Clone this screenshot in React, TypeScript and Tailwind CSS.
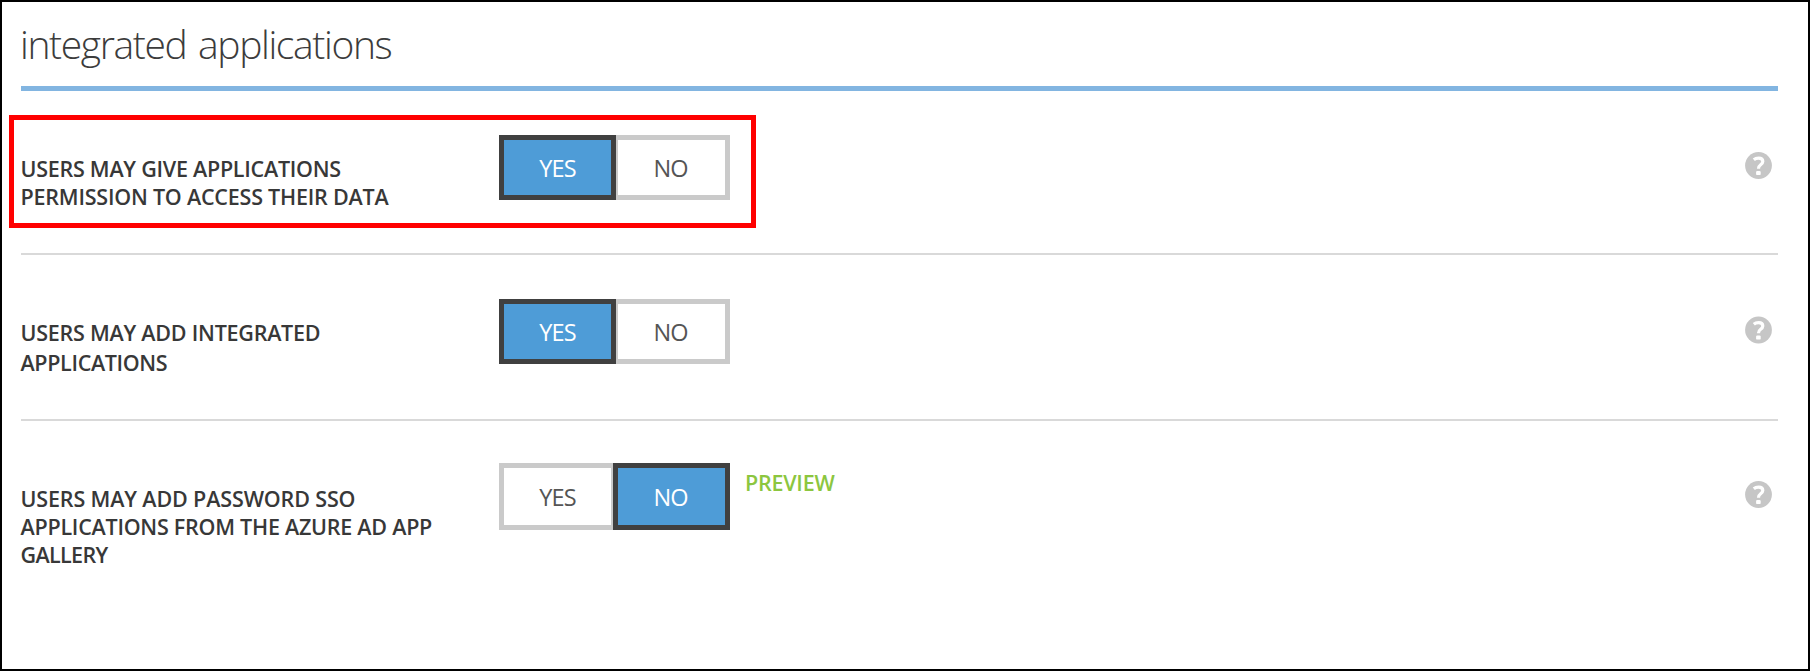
import { useState } from "react";

type Line = { text: string; className: string };
type Setting = {
  id: string;
  lines: Line[];
  initial: "YES" | "NO";
  preview?: boolean;
  rowClass: string;
  labelClass: string;
  toggleClass: string;
  helpClass: string;
};

const settings: Setting[] = [
  {
    id: "consent",
    lines: [
      { text: "USERS MAY GIVE APPLICATIONS", className: "h-7 tracking-[-0.26px]" },
      { text: "PERMISSION TO ACCESS THEIR DATA", className: "h-7 tracking-[-0.22px]" },
    ],
    initial: "YES",
    rowClass: "h-[164px] border-b-2 border-[#d9d9d9]",
    labelClass: "pt-[64px]",
    toggleClass: "mt-[44px] h-[65px]",
    helpClass: "mt-[61px] h-[27px]",
  },
  {
    id: "add-integrated",
    lines: [
      { text: "USERS MAY ADD INTEGRATED", className: "h-[30px] tracking-[-0.24px]" },
      { text: "APPLICATIONS", className: "h-7 tracking-[-0.35px]" },
    ],
    initial: "YES",
    rowClass: "h-[166px] border-b-2 border-[#d9d9d9]",
    labelClass: "pt-[64px]",
    toggleClass: "mt-[44px] h-[65px]",
    helpClass: "mt-[61px] h-[28px]",
  },
  {
    id: "add-password-sso",
    lines: [
      { text: "USERS MAY ADD PASSWORD SSO", className: "h-7 tracking-[-0.14px]" },
      { text: "APPLICATIONS FROM THE AZURE AD APP", className: "h-7 tracking-[-0.25px]" },
      { text: "GALLERY", className: "h-7 tracking-[-0.65px]" },
    ],
    initial: "NO",
    preview: true,
    rowClass: "h-[200px]",
    labelClass: "pt-[64px]",
    toggleClass: "mt-[42px] h-[67px]",
    helpClass: "mt-[60px] h-[27px]",
  },
];

function HelpIcon({ className }: { className: string }) {
  return (
    <svg viewBox="0 0 27 27" className={`w-[27px] shrink-0 ${className}`} aria-label="Help">
      <circle cx="13.5" cy="13.5" r="13.4" fill="#c6c6c6" />
      <path
        d="M8.8 7.8C10.2 6.6 11.7 6.2 13.6 6.2c2.7 0 4.2 1.2 4.2 3.2 0 1.7-1 2.6-2.4 3.6-1.4 1-1.9 1.8-1.9 3.7"
        fill="none"
        stroke="#fff"
        strokeWidth="3.2"
      />
      <rect x="11.1" y="18.9" width="4.6" height="4.2" rx="1.2" fill="#fff" />
    </svg>
  );
}

function Toggle({ initial, className }: { initial: "YES" | "NO"; className: string }) {
  const [value, setValue] = useState(initial);
  const on = "z-10 border-[#404040] bg-[#4e9cd7] text-white";
  const off = "border-[#cacaca] bg-white text-[#555]";
  return (
    <div className={`flex w-[231px] shrink-0 text-[23.5px] leading-none tracking-[-0.9px] ${className}`}>
      <button
        type="button"
        onClick={() => setValue("YES")}
        className={`relative w-[117px] border-[5px] pt-[3px] ${value === "YES" ? on : off}`}
      >
        YES
      </button>
      <button
        type="button"
        onClick={() => setValue("NO")}
        className={`relative -ml-[3px] w-[117px] border-[5px] pt-[3px] pr-[2px] ${value === "NO" ? on : off}`}
      >
        NO
      </button>
    </div>
  );
}

export default function App() {
  return (
    <main className="relative h-[671px] w-[1810px] overflow-hidden border-2 border-black bg-white pr-[30px] pl-[19px] font-['Open_Sans',sans-serif]">
      <h1 className="h-[89px] -indent-px border-b-[5px] border-[#82b5e1] pt-[15px] text-[39px] leading-[54px] font-light tracking-[-1.38px] whitespace-nowrap text-[#3c3c3c] [word-spacing:3px]">
        integrated applications
      </h1>
      {settings.map((s) => (
        <section key={s.id} className={`flex items-start ${s.rowClass}`}>
          <div className={`w-[478px] shrink-0 text-[21.5px] leading-7 font-semibold text-[#383838] ${s.labelClass}`}>
            {s.lines.map((l) => (
              <div key={l.text} className={`-indent-[0.5px] whitespace-nowrap ${l.className}`}>
                {l.text}
              </div>
            ))}
          </div>
          <Toggle initial={s.initial} className={s.toggleClass} />
          {s.preview && (
            <span className="mt-[48px] ml-[15px] text-[21.5px] leading-7 font-semibold tracking-[-0.25px] text-[#8cc63f]">
              PREVIEW
            </span>
          )}
          <HelpIcon className={`mr-[6px] ml-auto ${s.helpClass}`} />
        </section>
      ))}
      <div className="pointer-events-none absolute top-[113px] left-[7px] h-[113px] w-[747px] border-[5px] border-[#ff0000]" />
    </main>
  );
}
